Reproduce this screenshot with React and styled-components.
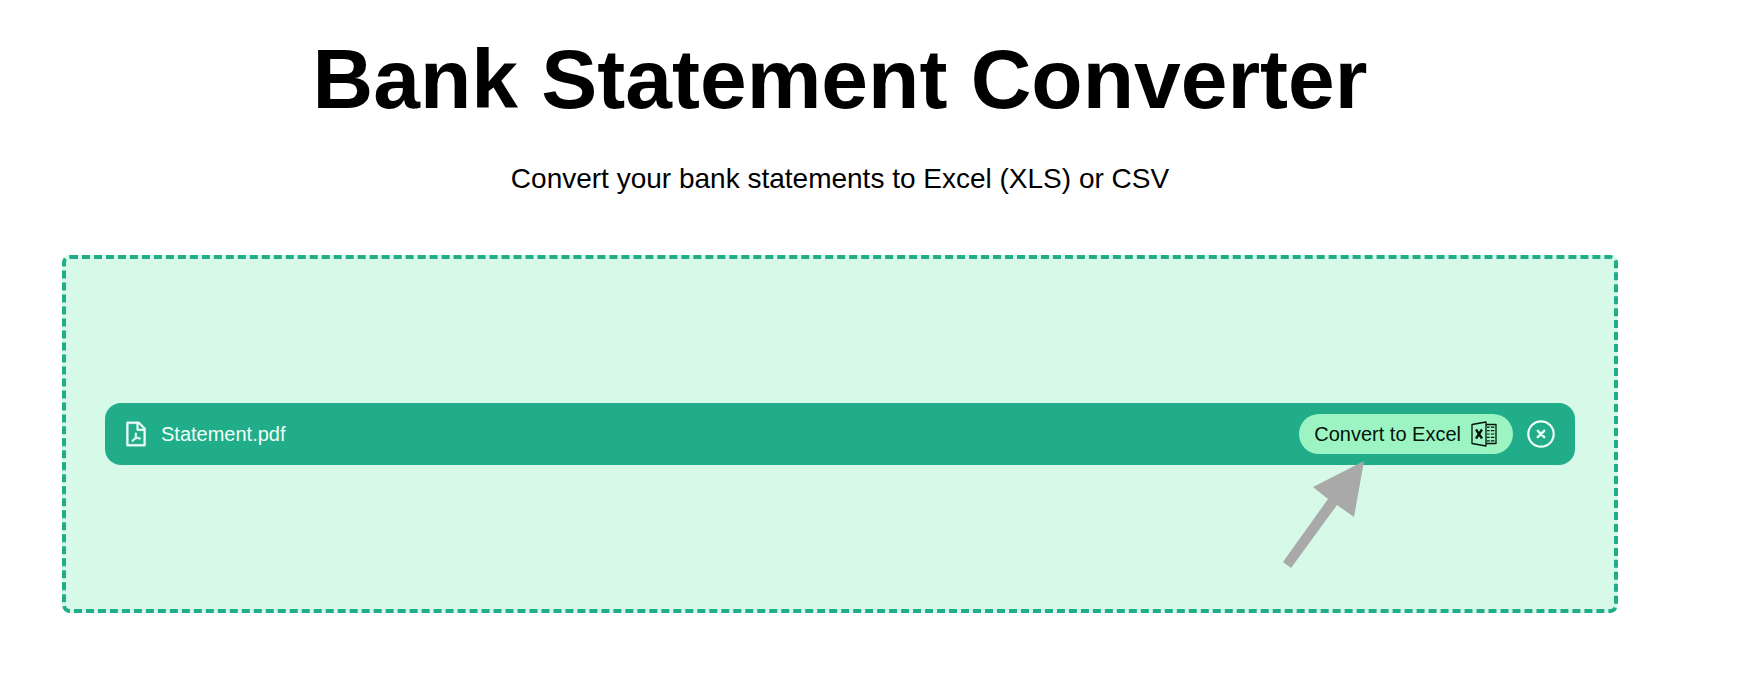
import React, { useState } from "react";
import styled, { createGlobalStyle } from "styled-components";
import { AiOutlineFilePdf } from "react-icons/ai";

export default function App() {
  const [files, setFiles] = useState(["Statement.pdf"]);

  const remove = (name) => setFiles(files.filter((file) => file !== name));

  return (
    <>
      <GlobalStyle />
      <Page>
        <Title>Bank Statement Converter</Title>
        <Subtitle>Convert your bank statements to Excel (XLS) or CSV</Subtitle>
        <DropZone aria-label="Statements">
          {files.map((name) => (
            <FileRow key={name} name={name} onRemove={() => remove(name)} />
          ))}
          <Pointer />
        </DropZone>
      </Page>
    </>
  );
}

function FileRow({ name, onRemove }) {
  return (
    <Row>
      <PdfIcon size={28} aria-hidden="true" />
      <FileName>{name}</FileName>
      <ConvertButton type="button">
        Convert to Excel
        <ExcelIcon />
      </ConvertButton>
      <RemoveButton type="button" aria-label={`Remove ${name}`} onClick={onRemove}>
        <CloseIcon />
      </RemoveButton>
    </Row>
  );
}

function ExcelIcon() {
  return (
    <svg width="26" height="26" viewBox="0 0 26 26" fill="none" stroke="currentColor" aria-hidden="true">
      <path d="M1 3.5 15 1v24L1 22.500z" strokeWidth="1.300" strokeLinejoin="round" />
      <path d="M15 3.500h10v19H15" strokeWidth="1.300" strokeLinejoin="round" />
      <path
        d="M16 6.200h2.600M16 9.600h2.600M16 13h2.600M16 16.400h2.600M16 19.800h2.600M19.800 6.200h3.600M19.800 9.600h3.600M19.800 13h3.600M19.800 16.400h3.600M19.800 19.800h3.600"
        strokeWidth="1.200"
      />
      <path d="M5 8.500l6 9M11 8.500l-6 9" strokeWidth="2.300" />
    </svg>
  );
}

function CloseIcon() {
  return (
    <svg width="28" height="28" viewBox="0 0 28 28" fill="none" stroke="currentColor" aria-hidden="true">
      <circle cx="14" cy="14" r="12.700" strokeWidth="2.200" />
      <path d="M10.800 10.800l6.400 6.400M17.200 10.800l-6.400 6.400" strokeWidth="2.400" strokeLinecap="round" />
    </svg>
  );
}

function Pointer() {
  return (
    <PointerSvg width="84" height="108" viewBox="0 0 84 108" aria-hidden="true">
      <path d="M82 0 31 26l15 12L1 101l8 6 46-63 17 12z" fill="#a9a9a9" />
    </PointerSvg>
  );
}

const GlobalStyle = createGlobalStyle`
  * {
    box-sizing: border-box;
  }

  body {
    margin: 0;
    background: #fff;
    color: #000;
    font-family: "Liberation Sans", Arial, sans-serif;
  }
`;

const Page = styled.main`
  display: flex;
  flex-direction: column;
  padding: 31px 126px 64px 62px;
  text-align: center;
`;

const Title = styled.h1`
  margin: 0;
  font-size: 84px;
  line-height: 96px;
`;

const Subtitle = styled.p`
  margin: 36px 0 60px;
  font-size: 28px;
  line-height: 32px;
`;

const DropZone = styled.section`
  position: relative;
  display: flex;
  flex-direction: column;
  justify-content: center;
  min-height: 358px;
  padding: 40px 39px;
  border: 4px dashed #21ad89;
  border-radius: 8px;
  background: #d7fae8;
`;

const Row = styled.div`
  display: flex;
  align-items: center;
  padding: 11px 20px 11px 17px;
  border-radius: 16px;
  background: #21ad89;
  color: #f0fff8;
`;

const PdfIcon = styled(AiOutlineFilePdf)`
  stroke: currentColor;
  stroke-width: 12;
`;

const FileName = styled.span`
  margin: 0 auto 0 11px;
  font-size: 20px;
  line-height: 24px;
`;

const ConvertButton = styled.button`
  display: flex;
  align-items: center;
  gap: 10px;
  height: 40px;
  padding: 0 16px 0 15px;
  border: 0;
  border-radius: 20px;
  background: #9df4c3;
  color: #03140a;
  font: inherit;
  font-size: 20px;
  cursor: pointer;
`;

const RemoveButton = styled.button`
  display: flex;
  margin-left: 14px;
  padding: 0;
  border: 0;
  background: none;
  color: inherit;
  cursor: pointer;
`;

/* arrow lying over the row, aimed at the convert button */
const PointerSvg = styled.svg`
  position: absolute;
  right: 248px;
  bottom: 40px;
  pointer-events: none;
`;
